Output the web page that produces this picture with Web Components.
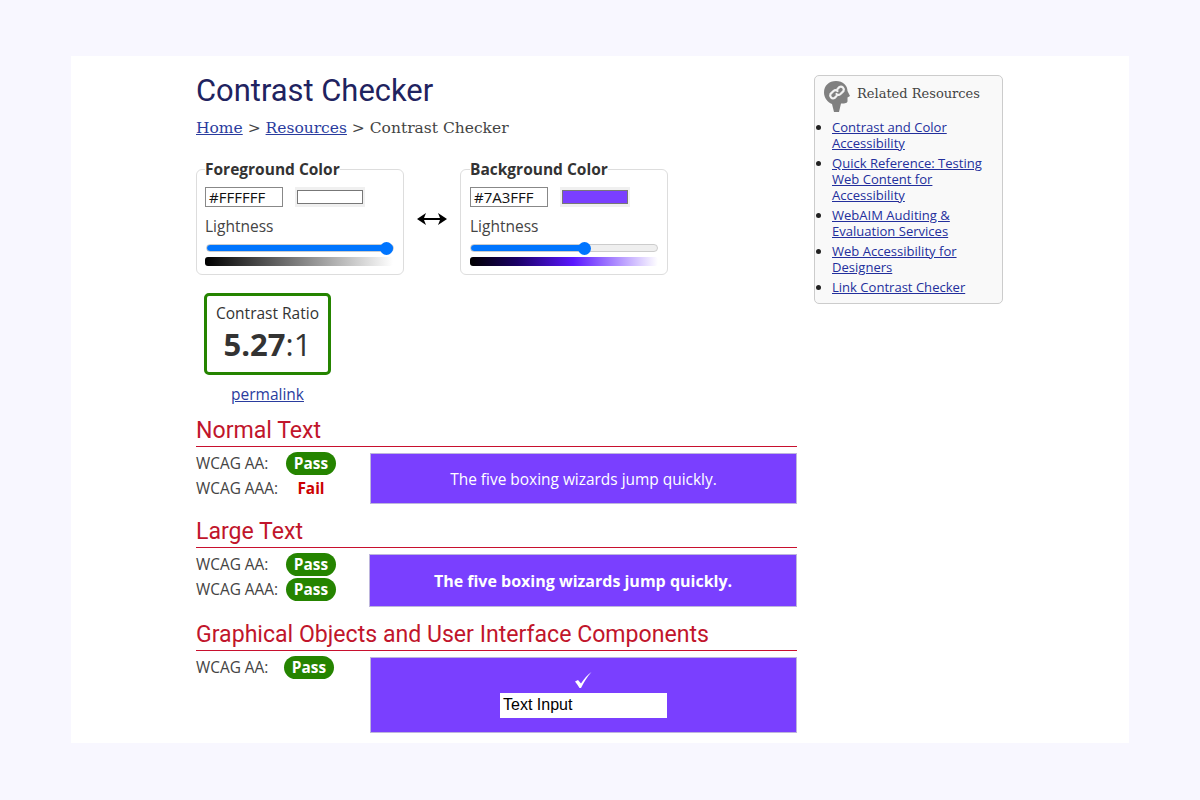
<!DOCTYPE html>
<html lang="en">
<head>
<meta charset="utf-8">
<title>Contrast Checker</title>
<style>
    html, body { margin: 0; background: #f8f7ff; }
    body { height: 800px; overflow: hidden; font-family: 'Open Sans', sans-serif; color: #333; }
    related-box a { color: #232f9c; }
</style>
</head>
<body>
<contrast-page>
    <color-field slot="fields" label="Foreground Color" hex="#FFFFFF" swatch="#ffffff" value="100" inset="8" ramp="linear-gradient(to right, #000, #fff)"></color-field>
    <swap-arrow slot="fields"></swap-arrow>
    <color-field slot="fields" label="Background Color" hex="#7A3FFF" swatch="#7a3fff" value="62" inset="9" ramp="linear-gradient(to right, #000, #1a0066 25%, #5a17ff 55%, #fff)"></color-field>

    <ratio-box slot="ratio" whole="5.27" rest=":1"></ratio-box>

    <result-section slot="results" heading="Normal Text">
        <wcag-row slot="rows" level="WCAG AA:" result="Pass"></wcag-row>
        <wcag-row slot="rows" level="WCAG AAA:" result="Fail"></wcag-row>
        <sample-box slot="sample" height="51" width="427">The five boxing wizards jump quickly.</sample-box>
    </result-section>
    <result-section slot="results" heading="Large Text">
        <wcag-row slot="rows" level="WCAG AA:" result="Pass"></wcag-row>
        <wcag-row slot="rows" level="WCAG AAA:" result="Pass"></wcag-row>
        <sample-box slot="sample" height="53" width="428" large>The five boxing wizards jump quickly.</sample-box>
    </result-section>
    <result-section slot="results" heading="Graphical Objects and User Interface Components">
        <wcag-row slot="rows" level="WCAG AA:" result="Pass" shift="-2"></wcag-row>
        <sample-box slot="sample" height="76" width="427"><ui-sample></ui-sample></sample-box>
    </result-section>

    <related-box slot="side">
        <li><a href="#">Contrast and Color Accessibility</a></li>
        <li><a href="#">Quick Reference: Testing Web Content for Accessibility</a></li>
        <li><a href="#">WebAIM Auditing &amp; Evaluation Services</a></li>
        <li><a href="#">Web Accessibility for Designers</a></li>
        <li><a href="#">Link Contrast Checker</a></li>
    </related-box>
</contrast-page>

<script>
class ContrastPage extends HTMLElement {
    constructor() {
        super();
        const shadow = this.attachShadow({ mode: 'open' });
        shadow.innerHTML = `
            <style>
                :host {
                    display: flex;
                    box-sizing: border-box;
                    margin: 56px 71px 0;
                    height: 687px;
                    padding-left: 125px;
                    gap: 17px;
                    background: #fff;
                    overflow: hidden;
                }
                main { width: 601px; flex: none; }
                h1 {
                    margin: 16px 0 0;
                    font: 400 30.9px/38px 'Roboto', sans-serif;
                    color: #1f2360;
                }
                nav {
                    margin-top: 7px;
                    font: 15.5px/22px 'DejaVu Serif', serif;
                    color: #444;
                }
                nav a { color: #2a3c9e; }
                .fields { display: flex; align-items: flex-start; margin-top: 20px; }
                .ratio { margin: 18px 0 -1px 8px; width: 127px; }
                aside { margin-top: 19px; width: 189px; flex: none; }
            </style>
            <main>
                <h1>Contrast Checker</h1>
                <nav><a href="#">Home</a> &gt; <a href="#">Resources</a> &gt; Contrast Checker</nav>
                <div class="fields"><slot name="fields"></slot></div>
                <div class="ratio"><slot name="ratio"></slot></div>
                <slot name="results"></slot>
            </main>
            <aside><slot name="side"></slot></aside>
        `;
    }
}

class ColorField extends HTMLElement {
    constructor() {
        super();
        const shadow = this.attachShadow({ mode: 'open' });
        const value = this.getAttribute('value');
        const inset = Number(this.getAttribute('inset'));
        shadow.innerHTML = `
            <style>
                :host { display: block; width: 208px; flex: none; font-family: 'Open Sans', sans-serif; color: #333; }
                fieldset {
                    margin: 0;
                    box-sizing: border-box;
                    width: 208px;
                    height: 116px;
                    padding: 0 8px 0 ${inset}px;
                    border: 1px solid #ddd;
                    border-radius: 6px;
                }
                legend { padding: 0; font-size: 15.5px; line-height: 20px; font-weight: 700; }
                .top { display: flex; align-items: center; gap: 12px; margin-top: 8px; }
                .hex {
                    box-sizing: border-box;
                    width: 78px;
                    height: 20px;
                    padding: 0 3px;
                    border: 1px solid #888;
                    background: #fff;
                    font: 15px/18px 'Open Sans', sans-serif;
                    color: #111;
                }
                .well { display: flex; padding: 3px 2px; background: #f0f0f0; }
                .swatch { box-sizing: border-box; width: 66px; height: 14px; border: 1px solid #777; }
                .light { margin-top: 8px; font-size: 15.5px; line-height: 22px; color: #444; }
                input {
                    -webkit-appearance: none;
                    appearance: none;
                    display: block;
                    margin: 4px 0 0 ${9 - inset}px;
                    width: 188px;
                    height: 14px;
                    background: transparent;
                }
                input::-webkit-slider-runnable-track {
                    height: 8px;
                    border-radius: 4px;
                    border: 1px solid #ccc;
                    box-sizing: border-box;
                    background: linear-gradient(to right, #0075ff ${value}%, #efefef ${value}%);
                }
                input::-webkit-slider-thumb {
                    -webkit-appearance: none;
                    width: 13px;
                    height: 13px;
                    margin-top: -3.5px;
                    border-radius: 50%;
                    background: #0075ff;
                }
                .ramp { margin-top: 2px; width: 188px; height: 9px; border-radius: 3px; background: ${this.getAttribute('ramp')}; }
            </style>
            <fieldset>
                <legend>${this.getAttribute('label')}</legend>
                <div class="top">
                    <div class="hex">${this.getAttribute('hex')}</div>
                    <div class="well"><div class="swatch" style="background:${this.getAttribute('swatch')}"></div></div>
                </div>
                <div class="light">Lightness</div>
                <input type="range" min="0" max="100" value="${value}">
                <div class="ramp"></div>
            </fieldset>
        `;
    }
}

class SwapArrow extends HTMLElement {
    constructor() {
        super();
        const shadow = this.attachShadow({ mode: 'open' });
        shadow.innerHTML = `
            <style>
                :host { display: block; width: 56px; flex: none; padding-top: 53px; box-sizing: border-box; }
                svg { display: block; margin: 0 auto; }
            </style>
            <svg width="30" height="14" viewBox="0 0 30 14" fill="#000">
                <path d="M0 7l9-6-2 5h16l-2-5 9 6-9 6 2-5H7l2 5z"/>
            </svg>
        `;
    }
}

class RatioBox extends HTMLElement {
    constructor() {
        super();
        const shadow = this.attachShadow({ mode: 'open' });
        shadow.innerHTML = `
            <style>
                :host { display: block; font-family: 'Open Sans', sans-serif; text-align: center; color: #333; }
                .box {
                    box-sizing: border-box;
                    height: 82px;
                    padding-top: 7px;
                    border: 3px solid #258400;
                    border-radius: 5px;
                }
                .label { font-size: 15.5px; line-height: 20px; }
                .num { font-size: 31px; line-height: 42px; }
                b { font-weight: 700; }
                a { display: block; margin-top: 9px; font-size: 15.5px; line-height: 20px; color: #2a3c9e; }
            </style>
            <div class="box">
                <div class="label">Contrast Ratio</div>
                <div class="num"><b>${this.getAttribute('whole')}</b>${this.getAttribute('rest')}</div>
            </div>
            <a href="#">permalink</a>
        `;
    }
}

class ResultSection extends HTMLElement {
    constructor() {
        super();
        const shadow = this.attachShadow({ mode: 'open' });
        shadow.innerHTML = `
            <style>
                :host { display: block; margin-top: 14px; }
                h2 {
                    margin: 0;
                    padding-bottom: 1px;
                    border-bottom: 1px solid #c8102e;
                    font: 400 23.1px/28px 'Roboto', sans-serif;
                    color: #c1152b;
                }
                .body { display: flex; justify-content: space-between; align-items: flex-start; padding-top: 6px; }
                .rows { flex: none; width: 170px; margin-top: -2px; }
            </style>
            <h2>${this.getAttribute('heading')}</h2>
            <div class="body">
                <div class="rows"><slot name="rows"></slot></div>
                <slot name="sample"></slot>
            </div>
        `;
    }
}

class WcagRow extends HTMLElement {
    constructor() {
        super();
        const shadow = this.attachShadow({ mode: 'open' });
        const result = this.getAttribute('result');
        const shift = Number(this.getAttribute('shift') || 0);
        shadow.innerHTML = `
            <style>
                :host {
                    display: flex;
                    align-items: center;
                    height: 25px;
                    font: 15.4px/22px 'Open Sans', sans-serif;
                    color: #444;
                }
                .level { width: ${90 + shift}px; flex: none; }
                .res {
                    flex: none;
                    box-sizing: border-box;
                    width: 50px;
                    height: 23px;
                    font-weight: 700;
                    line-height: 23px;
                    text-align: center;
                    border-radius: 12px;
                }
                .Pass { background: #258400; color: #fff; }
                .Fail { color: #c00; background: none; }
            </style>
            <span class="level">${this.getAttribute('level')}</span>
            <span class="res ${result}">${result}</span>
        `;
    }
}

class SampleBox extends HTMLElement {
    constructor() {
        super();
        const shadow = this.attachShadow({ mode: 'open' });
        const large = this.hasAttribute('large');
        shadow.innerHTML = `
            <style>
                :host {
                    display: flex;
                    align-items: center;
                    justify-content: center;
                    flex: none;
                    box-sizing: border-box;
                    width: ${this.getAttribute('width')}px;
                    height: ${this.getAttribute('height')}px;
                    border: 1px solid #bdb5dd;
                    background: #7a3fff;
                    color: #fff;
                    font-family: 'Open Sans', sans-serif;
                    font-size: ${large ? '16px' : '15.45px'};
                    font-weight: ${large ? 700 : 400};
                }
            </style>
            <slot></slot>
        `;
    }
}

class UiSample extends HTMLElement {
    constructor() {
        super();
        const shadow = this.attachShadow({ mode: 'open' });
        shadow.innerHTML = `
            <style>
                :host { display: flex; flex-direction: column; align-items: center; align-self: flex-start; margin-top: 13px; }
                svg { display: block; margin-right: 1px; }
                .field {
                    box-sizing: border-box;
                    width: 167px;
                    height: 25px;
                    margin-top: 4px;
                    padding-left: 3px;
                    background: #fff;
                    color: #000;
                    font: 16px/24px 'Liberation Sans', sans-serif;
                }
            </style>
            <svg width="18" height="18" viewBox="0 0 18 18" fill="#fff">
                <path d="M1 10.500L4 9l3 3.500C10 8 13 4 17.500 1 13 6 10 11 7 17H5.500C4 14.500 2.500 12.500 1 10.500z"/>
            </svg>
            <div class="field">Text Input</div>
        `;
    }
}

class RelatedBox extends HTMLElement {
    constructor() {
        super();
        const shadow = this.attachShadow({ mode: 'open' });
        shadow.innerHTML = `
            <style>
                :host {
                    display: block;
                    box-sizing: border-box;
                    height: 229px;
                    border: 1px solid #ccc;
                    border-radius: 5px;
                    background: #f9f9f9;
                    font-family: 'Open Sans', sans-serif;
                }
                .head { display: flex; align-items: center; gap: 7px; padding: 5px 0 0 9px; }
                h2 { margin: 0 0 6px; font: 400 13px/18px 'DejaVu Serif', serif; color: #444; }
                ul { margin: 7px 0 0; padding: 0 0 0 17px; }
                ::slotted(li) { margin-bottom: 4px; font-size: 13.05px; line-height: 16px; color: #222; }
            </style>
            <div class="head">
                <svg width="26" height="31" viewBox="0 0 26 31">
                    <path fill="#808080" d="M12 0c7 0 11.500 4.500 11.500 10l2.500 5-2.500 1.500V20c0 2-2 2.500-6.500 2.500l-2 8.500H10L8 23C3.500 21 0 17 0 11.500 0 4.500 5 0 12 0z"/>
                    <path fill="none" stroke="#f2f2f2" stroke-width="2.200" stroke-linecap="round" transform="translate(1.500 -1.500)" d="M11 16.500l-2 2a3 3 0 0 1-4-4l3-3a3 3 0 0 1 4 0M12 9.500l2-2a3 3 0 0 1 4 4l-3 3a3 3 0 0 1-4 0"/>
                </svg>
                <h2>Related Resources</h2>
            </div>
            <ul><slot></slot></ul>
        `;
    }
}

customElements.define('contrast-page', ContrastPage);
customElements.define('color-field', ColorField);
customElements.define('swap-arrow', SwapArrow);
customElements.define('ratio-box', RatioBox);
customElements.define('result-section', ResultSection);
customElements.define('wcag-row', WcagRow);
customElements.define('sample-box', SampleBox);
customElements.define('ui-sample', UiSample);
customElements.define('related-box', RelatedBox);
</script>
</body>
</html>
